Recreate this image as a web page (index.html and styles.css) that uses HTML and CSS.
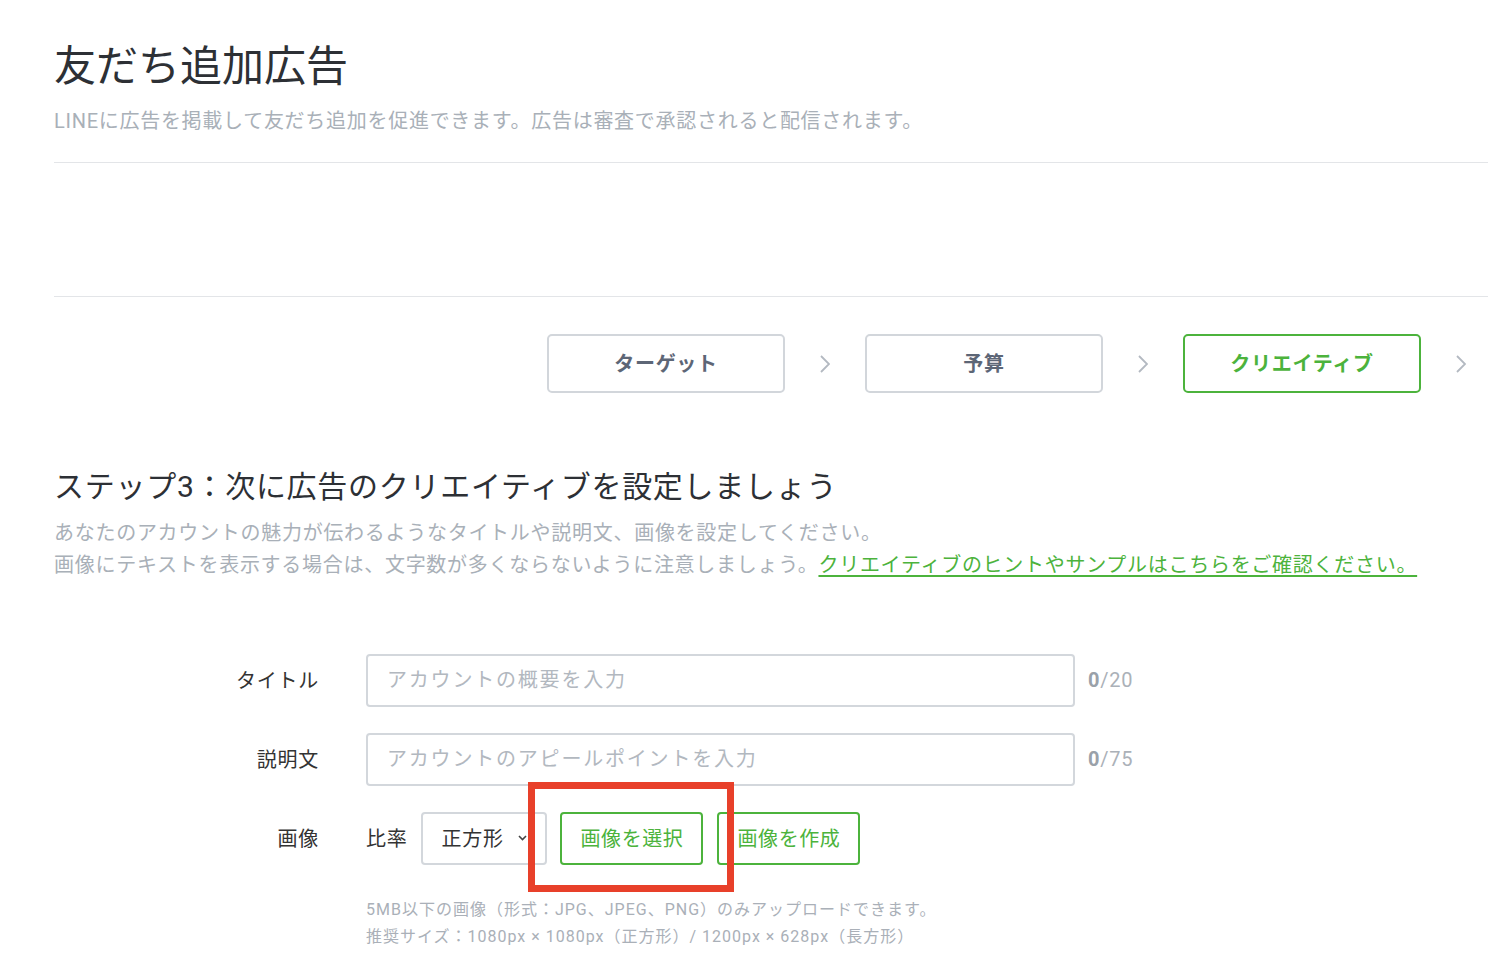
FILE: index.html
```html
<!DOCTYPE html>
<html lang="ja">
<head>
    <meta charset="UTF-8">
    <meta name="viewport" content="width=device-width, initial-scale=1.0">
    <title>友だち追加広告</title>
    <link rel="stylesheet" href="styles.css">
</head>
<body>
    <div class="page">
        <header class="page-head">
            <h1>友だち追加広告</h1>
            <p class="lead">LINEに広告を掲載して友だち追加を促進できます。広告は審査で承認されると配信されます。</p>
        </header>

        <div class="blank-area"></div>

        <!-- Steps -->
        <ol class="steps">
            <li class="step">
                <span class="step-box">ターゲット</span>
                <span class="step-arrow"><svg width="10" height="18" viewBox="0 0 10 18"><polyline points="1,1 9,9 1,17" fill="none" stroke="#b3b9c1" stroke-width="1.8"/></svg></span>
            </li>
            <li class="step">
                <span class="step-box">予算</span>
                <span class="step-arrow"><svg width="10" height="18" viewBox="0 0 10 18"><polyline points="1,1 9,9 1,17" fill="none" stroke="#b3b9c1" stroke-width="1.8"/></svg></span>
            </li>
            <li class="step current">
                <span class="step-box">クリエイティブ</span>
                <span class="step-arrow"><svg width="10" height="18" viewBox="0 0 10 18"><polyline points="1,1 9,9 1,17" fill="none" stroke="#b3b9c1" stroke-width="1.8"/></svg></span>
            </li>
        </ol>

        <section class="creative">
            <h2>ステップ3：次に広告のクリエイティブを設定しましょう</h2>
            <p class="desc">あなたのアカウントの魅力が伝わるようなタイトルや説明文、画像を設定してください。<br>画像にテキストを表示する場合は、文字数が多くならないように注意しましょう。<a href="#" class="hint-link">クリエイティブのヒントやサンプルはこちらをご確認ください。</a></p>

            <form class="creative-form">
                <div class="form-row">
                    <label class="form-label">タイトル</label>
                    <input type="text" class="text-input" placeholder="アカウントの概要を入力">
                    <span class="counter"><b>0</b>/20</span>
                </div>
                <div class="form-row">
                    <label class="form-label">説明文</label>
                    <input type="text" class="text-input" placeholder="アカウントのアピールポイントを入力">
                    <span class="counter"><b>0</b>/75</span>
                </div>
                <div class="form-row image-row">
                    <label class="form-label">画像</label>
                    <div class="image-controls">
                        <span class="ratio-label">比率</span>
                        <div class="ratio-select">
                            <span>正方形</span>
                            <svg width="9" height="6" viewBox="0 0 9 6"><polyline points="1,1 4.5,4.5 8,1" fill="none" stroke="#444" stroke-width="1.6"/></svg>
                        </div>
                        <span class="highlight">
                            <button type="button" class="green-btn">画像を選択</button>
                        </span>
                        <button type="button" class="green-btn">画像を作成</button>
                    </div>
                </div>
                <div class="form-note">
                    <p>5MB以下の画像（形式：JPG、JPEG、PNG）のみアップロードできます。</p>
                    <p>推奨サイズ：1080px × 1080px（正方形）/ 1200px × 628px（長方形）</p>
                </div>
            </form>
        </section>
    </div>
</body>
</html>
```

FILE: styles.css
```css
/* General Reset */
* {
    margin: 0;
    padding: 0;
    box-sizing: border-box;
}

body {
    font-family: Roboto, "Noto Sans CJK JP", sans-serif;
    background: #fff;
    color: #333;
    letter-spacing: 0.045em;
    overflow-x: hidden;
}

.page {
    padding: 42px 0 0 54px;
    width: 1560px;
}

.page-head h1 {
    font-size: 42px;
    line-height: 50px;
    font-weight: 400;
    letter-spacing: 0;
    color: #2d3035;
}

.page-head .lead {
    margin-top: 14px;
    font-size: 20px;
    line-height: 30px;
    color: #a9b0b8;
}

.blank-area {
    margin-top: 26px;
    width: 1434px;
    height: 135px;
    border-top: 1px solid #e3e5e8;
    border-bottom: 1px solid #e3e5e8;
}

/* Steps */
.steps {
    list-style: none;
    display: flex;
    margin: 37px 0 0 493px;
}

.step {
    display: flex;
    align-items: center;
}

.step-box {
    width: 238px;
    height: 59px;
    border: 2px solid #d2d6db;
    border-radius: 5px;
    display: flex;
    align-items: center;
    justify-content: center;
    padding-bottom: 3px;
    font-size: 20px;
    font-weight: 700;
    color: #5d6676;
}

.step.current .step-box {
    border-color: #4cb33c;
    color: #4cb33c;
}

.step-arrow {
    width: 80px;
    display: flex;
    justify-content: center;
}

/* Creative step */
.creative h2 {
    margin-top: 74px;
    font-size: 30px;
    line-height: 40px;
    font-weight: 400;
    color: #2d3035;
}

.creative .desc {
    margin-top: 10px;
    font-size: 20px;
    line-height: 32px;
    color: #a9b0b8;
}

.hint-link {
    color: #4cb33c;
    text-decoration: underline;
    text-underline-offset: 3px;
}

.creative-form {
    margin-top: 73px;
}

.form-row {
    display: flex;
    align-items: center;
    margin-bottom: 26px;
}

.image-row {
    margin-bottom: 0;
}

.form-label {
    width: 265px;
    margin-right: 47px;
    padding-bottom: 2px;
    text-align: right;
    font-size: 20px;
    color: #333;
}

.text-input {
    width: 709px;
    height: 53px;
    border: 2px solid #d3d7dc;
    border-radius: 4px;
    padding: 0 19px 2px;
    font-family: inherit;
    font-size: 20px;
    letter-spacing: 0.09em;
    color: #333;
    outline: none;
}

.text-input::placeholder {
    color: #b2b8bf;
}

.counter {
    margin-left: 13px;
    padding-bottom: 2px;
    font-size: 20px;
    color: #abb1b8;
}

.counter b {
    color: #9aa1a9;
}

.image-controls {
    display: flex;
    align-items: center;
}

.ratio-label {
    font-size: 20px;
    color: #333;
    margin-right: 14px;
    padding-bottom: 2px;
}

.ratio-select {
    width: 126px;
    height: 53px;
    border: 2px solid #d3d7dc;
    border-radius: 4px;
    display: flex;
    align-items: center;
    gap: 14px;
    padding: 0 0 2px 18px;
    font-size: 20px;
    color: #333;
    margin-right: 13px;
}

.green-btn {
    height: 53px;
    width: 143px;
    background: #fff;
    border: 2px solid #4cb33c;
    border-radius: 4px;
    padding-bottom: 2px;
    font-family: inherit;
    font-size: 20px;
    letter-spacing: 0.03em;
    color: #4cb33c;
    cursor: pointer;
}

.highlight {
    position: relative;
    display: inline-flex;
    margin-right: 14px;
}

.highlight::after {
    content: "";
    position: absolute;
    top: -30px;
    left: -32px;
    right: -31px;
    bottom: -27px;
    border: 7px solid #e8402a;
    pointer-events: none;
}

.form-note {
    margin: 31px 0 0 312px;
    font-size: 16px;
    line-height: 27px;
    letter-spacing: 1px;
    color: #aab0b8;
}
```
